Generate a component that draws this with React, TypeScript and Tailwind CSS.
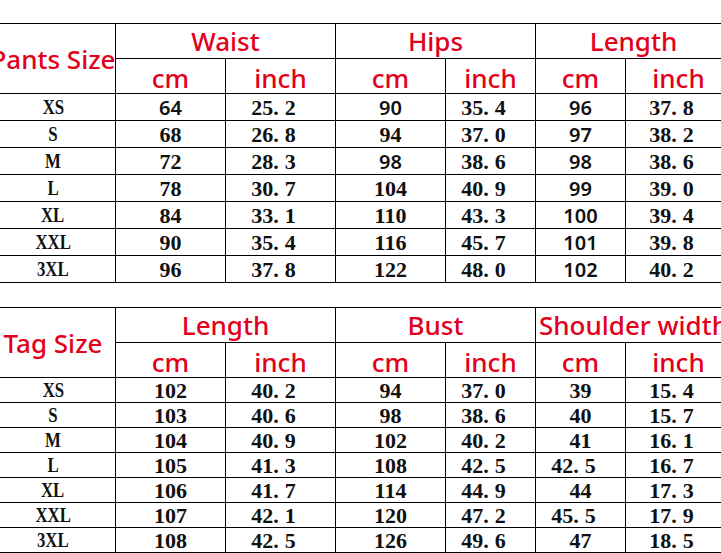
type Cell = { v: string; sans?: boolean };

interface SizeTable {
  label: string;
  labelSize: string;
  groups: string[];
  rows: Cell[][];
  rowsClass: string;
}

const s = (v: string): Cell => ({ v, sans: true });
const m = (v: string): Cell => ({ v });

const pants: SizeTable = {
  label: 'Pants Size',
  labelSize: 'text-[23px]',
  groups: ['Waist', 'Hips', 'Length'],
  rowsClass: 'grid-rows-[34px_34px_repeat(7,26px)]',
  rows: [
    [m('XS'), s('64'), m('25.2'), s('90'), m('35.4'), s('96'), m('37.8')],
    [m('S'), m('68'), m('26.8'), m('94'), m('37.0'), s('97'), m('38.2')],
    [m('M'), m('72'), m('28.3'), s('98'), m('38.6'), s('98'), m('38.6')],
    [m('L'), m('78'), m('30.7'), m('104'), m('40.9'), s('99'), m('39.0')],
    [m('XL'), m('84'), m('33.1'), m('110'), m('43.3'), s('100'), m('39.4')],
    [m('XXL'), m('90'), m('35.4'), m('116'), m('45.7'), s('101'), m('39.8')],
    [m('3XL'), m('96'), m('37.8'), m('122'), m('48.0'), s('102'), m('40.2')],
  ],
};

const tops: SizeTable = {
  label: 'Tag Size',
  labelSize: 'text-[26px]',
  groups: ['Length', 'Bust', 'Shoulder width'],
  rowsClass: 'grid-rows-[34px_34px_repeat(7,24px)]',
  rows: [
    [m('XS'), m('102'), m('40.2'), m('94'), m('37.0'), m('39'), m('15.4')],
    [m('S'), m('103'), m('40.6'), m('98'), m('38.6'), m('40'), m('15.7')],
    [m('M'), m('104'), m('40.9'), m('102'), m('40.2'), m('41'), m('16.1')],
    [m('L'), m('105'), m('41.3'), m('108'), m('42.5'), m('42.5'), m('16.7')],
    [m('XL'), m('106'), m('41.7'), m('114'), m('44.9'), m('44'), m('17.3')],
    [m('XXL'), m('107'), m('42.1'), m('120'), m('47.2'), m('45.5'), m('17.9')],
    [m('3XL'), m('108'), m('42.5'), m('126'), m('49.6'), m('47'), m('18.5')],
  ],
};

// red header text, a little heavier than regular like the source image
const red = "text-[#e3001b] font-['Noto_Sans',sans-serif] font-medium text-[26px] leading-none";

const Value = ({ cell }: { cell: Cell }) => {
  if (cell.sans) {
    return (
      <span className="font-['Noto_Sans',sans-serif] text-[20px] font-semibold leading-none text-[#111]">
        {cell.v}
      </span>
    );
  }
  const [a, b] = cell.v.split('.');
  if (b === undefined) {
    return <span className="font-['Liberation_Serif',serif] text-[22px] font-bold leading-none text-[#111]">{a}</span>;
  }
  return (
    <span className="pr-[14px] font-['Liberation_Serif',serif] text-[22px] font-bold leading-none text-[#111]">
      {a}.<span className="ml-[6px]">{b}</span>
    </span>
  );
};

const Table = ({ t }: { t: SizeTable }) => (
  <div
    className={`ml-[-10px] grid w-max grid-cols-[124px_109px_109px_109px_89px_89px_105px] ${t.rowsClass} gap-px bg-black p-px`}
  >
    <div className={`row-span-2 flex items-center justify-center bg-white whitespace-nowrap ${red} ${t.labelSize}`}>
      {t.label}
    </div>
    {t.groups.map((g) => (
      <div key={g} className={`col-span-2 flex items-center justify-center bg-white whitespace-nowrap ${red}`}>
        {g}
      </div>
    ))}
    {t.groups.map((g) =>
      ['cm', 'inch'].map((u) => (
        <div key={g + u} className={`flex items-center justify-center bg-white pt-[4px] ${red}`}>
          {u}
        </div>
      ))
    )}
    {t.rows.map((row, i) =>
      row.map((cell, j) =>
        j === 0 ? (
          <div key={`${i}-${j}`} className="flex items-center justify-center bg-white">
            <span className="inline-block scale-x-80 font-['Liberation_Serif',serif] text-[21px] font-bold leading-none text-[#111]">
              {cell.v}
            </span>
          </div>
        ) : (
          <div key={`${i}-${j}`} className="flex items-center justify-center bg-white pt-[2px]">
            <Value cell={cell} />
          </div>
        )
      )
    )}
  </div>
);

export default function App() {
  return (
    <div className="h-[553px] w-[721px] overflow-hidden bg-white pt-[23px]">
      <Table t={pants} />
      <div className="h-[24px]" />
      <Table t={tops} />
    </div>
  );
}
